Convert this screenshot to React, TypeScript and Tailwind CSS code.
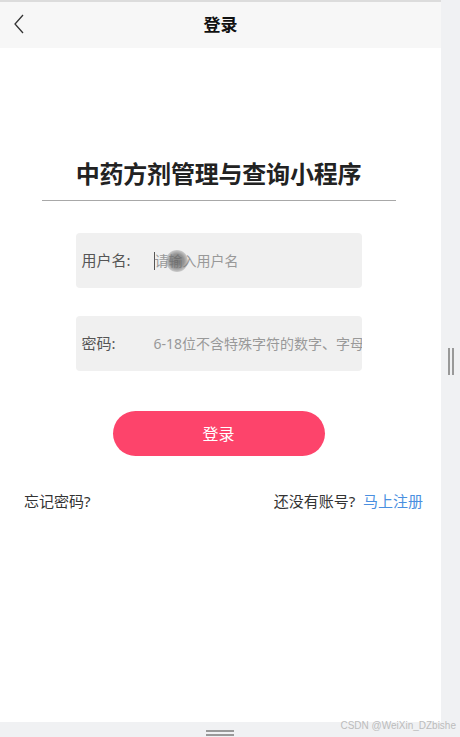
import React from 'react';

const App: React.FC = () => {
  return (
    <div
      className="w-[460px] h-[737px] bg-[#f0f1f3] relative overflow-hidden flex"
      style={{ fontFamily: '"Noto Sans", "Noto Sans CJK SC", sans-serif' }}
    >
      <div className="w-[441px] h-[722px] bg-white flex flex-col border-t-2 border-[#dcdcdc]">
        {/* header */}
        <div className="h-[46px] bg-[#f7f7f7] relative flex items-center justify-center shrink-0">
          <svg className="absolute left-[12px] top-[12px] w-[14px] h-[20px]" viewBox="0 0 14 20" fill="none" stroke="#333" strokeWidth={1.3}>
            <path d="M11 1 L3 10 L11 19" />
          </svg>
          <span className="text-[17px] font-bold text-[#111]">登录</span>
        </div>

        <div className="flex flex-col items-center pt-[110px] pr-[4px]">
          <h1 className="text-[24px] font-bold text-[#222] leading-[32px] tracking-[-0.2px]">中药方剂管理与查询小程序</h1>
          <div className="w-[354px] h-px bg-[#a8a8a8] mt-[10px]" />

          <div className="mt-[32px] w-[286px] h-[55px] bg-[#f0f0f0] rounded-[4px] flex items-center pl-[6px] relative">
            <span className="text-[15px] text-[#555] w-[72px]">用户名:</span>
            <span className="w-px h-[18px] bg-[#555]" />
            <span className="text-[14px] text-[#999]">请输入用户名</span>
            <span className="absolute left-[90px] top-[17px] w-[22px] h-[22px] rounded-full bg-[radial-gradient(circle,rgba(90,90,90,0.75)_0%,rgba(110,110,110,0.7)_45%,rgba(130,130,130,0.25)_75%,transparent_100%)]" />
          </div>

          <div className="mt-[28px] w-[286px] h-[55px] bg-[#f0f0f0] rounded-[4px] flex items-center pl-[6px] overflow-hidden whitespace-nowrap">
            <span className="text-[15px] text-[#555] w-[72px] shrink-0">密码:</span>
            <span className="text-[14px] text-[#999]">6-18位不含特殊字符的数字、字母组合</span>
          </div>

          <button className="mt-[40px] w-[212px] h-[45px] rounded-full bg-[#fd446b] text-white text-[16px]">登录</button>
        </div>

        <div className="flex justify-between items-center pl-[24px] pr-[18px] mt-[34px] text-[15px] text-[#333]">
          <span>忘记密码?</span>
          <span>
            还没有账号?&nbsp; <span className="text-[#4a8fe0]">马上注册</span>
          </span>
        </div>
      </div>

      {/* right scrollbar grip */}
      <div className="absolute left-[448px] top-[348px] flex gap-[2px]">
        <span className="w-[2px] h-[27px] bg-[#999]" />
        <span className="w-[2px] h-[27px] bg-[#999]" />
      </div>

      {/* bottom grip */}
      <div className="absolute left-[206px] top-[730px] flex flex-col gap-[2px]">
        <span className="w-[28px] h-[2px] bg-[#999]" />
        <span className="w-[28px] h-[2px] bg-[#999]" />
      </div>

      <span
        className="absolute right-[4px] top-[718px] text-[10px] text-[#bcbcbc]"
        style={{ fontFamily: '"Liberation Sans", sans-serif' }}
      >
        CSDN @WeiXin_DZbishe
      </span>
    </div>
  );
};

export default App;
